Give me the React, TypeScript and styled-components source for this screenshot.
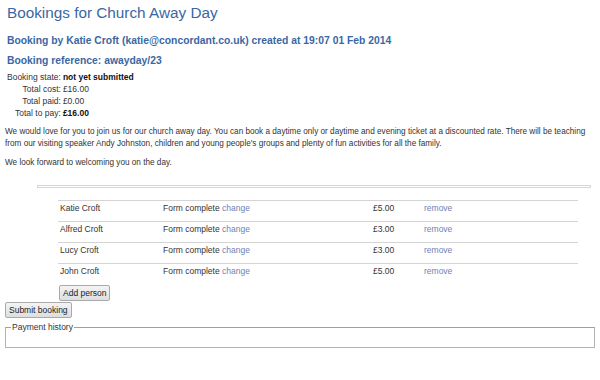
import React from "react";
import styled, { createGlobalStyle } from "styled-components";

const GlobalStyle = createGlobalStyle`
    html, body {
        margin: 0;
        padding: 0;
        background: #ffffff;
    }
    body {
        font-family: "Liberation Sans", Arial, sans-serif;
        font-size: 8.5px;
        color: #333333;
    }
`;

type Person = {
    name: string,
    status: string,
    price: string,
}

const people: Person[] = [
    { name: "Katie Croft", status: "Form complete", price: "£5.00" },
    { name: "Alfred Croft", status: "Form complete", price: "£3.00" },
    { name: "Lucy Croft", status: "Form complete", price: "£3.00" },
    { name: "John Croft", status: "Form complete", price: "£5.00" },
];

const Page = styled.div`
    padding: 0 5px;
    width: 590px;
`;

const Title = styled.h1`
    font-size: 15.3px;
    font-weight: normal;
    color: #3a67a3;
    margin: 0;
    padding: 4px 2px 0;
    line-height: 18px;
`;

const SubTitle = styled.h2<{ $gap: number }>`
    font-size: 10.35px;
    font-weight: bold;
    color: #3a67a3;
    margin: 0;
    padding: 0 2px;
    line-height: 13px;
    margin-top: ${(p) => p.$gap}px;
`;

const StateTable = styled.table`
    border-collapse: collapse;
    margin-top: 4px;
    margin-left: 2px;
    td {
        padding: 0;
        line-height: 12px;
        font-size: 8.5px;
    }
`;

const Label = styled.td`
    text-align: right;
    padding-right: 2px !important;
    color: #333333;
`;

const Value = styled.td<{ $strong?: boolean }>`
    font-weight: ${(p) => (p.$strong ? "bold" : "normal")};
    color: ${(p) => (p.$strong ? "#111111" : "#333333")};
`;

const Para = styled.p`
    margin: 7px 0 0;
    line-height: 12px;
    font-size: 8.2px;
`;

const Divider = styled.div`
    margin: 16px 4px 0 32px;
    height: 1px;
    border: 1px solid #d6d6d6;
`;

const PeopleTable = styled.table`
    border-collapse: collapse;
    margin: 12px 0 0 53px;
    width: 520px;
`;

const Row = styled.tr`
    td {
        border-top: 1px solid #d4d4d4;
        padding: 1px 2px 7px 2px;
        line-height: 12px;
        vertical-align: top;
    }
`;

const NameCell = styled.td`
    width: 99px;
`;

const StatusCell = styled.td`
    width: 206px;
`;

const PriceCell = styled.td`
    width: 47px;
`;

const Link = styled.a`
    color: #6f7fb5;
    text-decoration: none;
    cursor: pointer;
`;

const Button = styled.button`
    font-family: "Liberation Sans", Arial, sans-serif;
    font-size: 8.5px;
    color: #222222;
    padding: 2px 3px 1px;
    line-height: 11px;
    background: linear-gradient(#f4f4f4, #dedede);
    border: 1px solid #aaaaaa;
    border-radius: 2px;
    display: block;
`;

const AddButton = styled(Button)`
    margin: 1px 0 0 54px;
`;

const SubmitButton = styled(Button)`
    margin: 1px 0 0 0;
`;

const History = styled.fieldset`
    margin: 4px 0 0;
    padding: 0;
    height: 24px;
    border: 1px solid #b4b4b4;
    border-top-color: #a0a0a0;
    legend {
        padding: 0 1px;
        margin-left: 5px;
        line-height: 10px;
    }
`;

export default function App() {
    return (
        <Page>
            <GlobalStyle />
            <Title>Bookings for Church Away Day</Title>
            <SubTitle $gap={12}>Booking by Katie Croft (katie@concordant.co.uk) created at 19:07 01 Feb 2014</SubTitle>
            <SubTitle $gap={7}>Booking reference: awayday/23</SubTitle>
            <StateTable>
                <tbody>
                    <tr><Label>Booking state:</Label><Value $strong>not yet submitted</Value></tr>
                    <tr><Label>Total cost:</Label><Value>£16.00</Value></tr>
                    <tr><Label>Total paid:</Label><Value>£0.00</Value></tr>
                    <tr><Label>Total to pay:</Label><Value $strong>£16.00</Value></tr>
                </tbody>
            </StateTable>
            <Para>
                We would love for you to join us for our church away day. You can book a daytime only or daytime and evening ticket at a discounted rate. There will be teaching from our visiting speaker Andy Johnston, children and young people's groups and plenty of fun activities for all the family.
            </Para>
            <Para>We look forward to welcoming you on the day.</Para>
            <Divider />
            <PeopleTable>
                <tbody>
                    {people.map((person) => (
                        <Row key={person.name}>
                            <NameCell>{person.name}</NameCell>
                            <StatusCell>{person.status} <Link>change</Link></StatusCell>
                            <PriceCell>{person.price}</PriceCell>
                            <td><Link>remove</Link></td>
                        </Row>
                    ))}
                </tbody>
            </PeopleTable>
            <AddButton>Add person</AddButton>
            <SubmitButton>Submit booking</SubmitButton>
            <History>
                <legend>Payment history</legend>
            </History>
        </Page>
    );
}
